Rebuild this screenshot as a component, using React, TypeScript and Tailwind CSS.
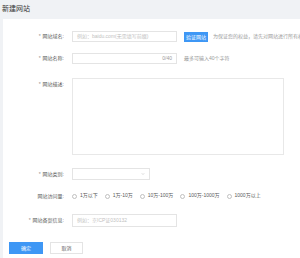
import { ChevronDown } from 'lucide-react';

const font = { fontFamily: '"Liberation Sans", "Noto Sans CJK SC", sans-serif' };

function Label({ text, required = true }: { text: string; required?: boolean }) {
  return (
    <div className="w-[62px] shrink-0 pr-[1px] text-right text-[5px] leading-[11px] text-[#595959]">
      {required && <span className="mr-[2px] text-[#8c8c8c]">*</span>}
      {text}
    </div>
  );
}

const visits = ['1万以下', '1万-10万', '10万-100万', '100万-1000万', '1000万以上'];

export default function App() {
  return (
    <div className="w-[300px] h-[258px] overflow-hidden bg-[#f0f2f5]" style={font}>
      <div className="h-[19px] pl-[2px] flex items-center text-[7px] text-[#333]">新建网站</div>
      <div className="ml-[3px] h-[239px] bg-white pt-[12px] overflow-hidden">
        <div className="flex items-center gap-[7px] overflow-hidden">
          <Label text="网站域名:" />
          <div className="w-[105px] h-[11px] shrink-0 border border-[#e4e4e4] px-[4px] text-[5px] leading-[9px] text-[#bfbfbf]">
            例如：baidu.com(无需填写前缀)
          </div>
          <button className="w-[24px] h-[10px] shrink-0 bg-[#3e97f5] text-white text-[5px] leading-[10px]">验证网站</button>
          <div className="min-w-0 -ml-[2px] whitespace-nowrap overflow-hidden text-[5px] text-[#9a9a9a]">为保证您的权益，请先对网站进行所有权验证</div>
        </div>

        <div className="mt-[11px] flex items-center gap-[7px]">
          <Label text="网站名称:" />
          <div className="w-[105px] h-[11px] shrink-0 border border-[#e4e4e4] px-[4px] flex justify-end text-[5px] leading-[9px] text-[#9a9a9a]">
            0/40
          </div>
          <div className="whitespace-nowrap text-[5px] text-[#9a9a9a]">最多可输入40个字符</div>
        </div>

        <div className="mt-[14px] flex items-start gap-[7px]">
          <div className="pt-[1px]"><Label text="网站描述:" /></div>
          <div className="w-[212px] h-[77px] shrink-0 border border-[#e8e8e8]" />
        </div>

        <div className="mt-[13px] flex items-center gap-[7px]">
          <Label text="网站类别:" />
          <div className="w-[78px] h-[12px] shrink-0 border border-[#e4e4e4] flex items-center justify-end pr-[4px]">
            <ChevronDown className="w-[4px] h-[4px] text-[#999]" strokeWidth={2} />
          </div>
        </div>

        <div className="mt-[11px] flex items-center gap-[7px] h-[10px]">
          <Label text="网站访问量:" required={false} />
          <div className="flex items-center gap-[7px]">
            {visits.map((v) => (
              <label key={v} className="flex items-center gap-[3px] whitespace-nowrap text-[5px] text-[#595959]">
                <span className="w-[5px] h-[5px] rounded-full border border-[#bfbfbf]" />
                {v}
              </label>
            ))}
          </div>
        </div>

        <div className="mt-[13px] flex items-center gap-[7px]">
          <Label text="网站备案信息:" />
          <div className="w-[105px] h-[13px] shrink-0 border border-[#e4e4e4] px-[4px] text-[5px] leading-[11px] text-[#bfbfbf]">
            例如：京ICP证030132
          </div>
        </div>

        <div className="mt-[15px] pl-[6px] flex items-center gap-[7px]">
          <button className="w-[34px] h-[12px] bg-[#3e97f5] text-white text-[5px] leading-[12px]">确定</button>
          <button className="w-[33px] h-[12px] border border-[#e4e4e4] bg-white text-[#595959] text-[5px] leading-[10px]">取消</button>
        </div>
      </div>
    </div>
  );
}
